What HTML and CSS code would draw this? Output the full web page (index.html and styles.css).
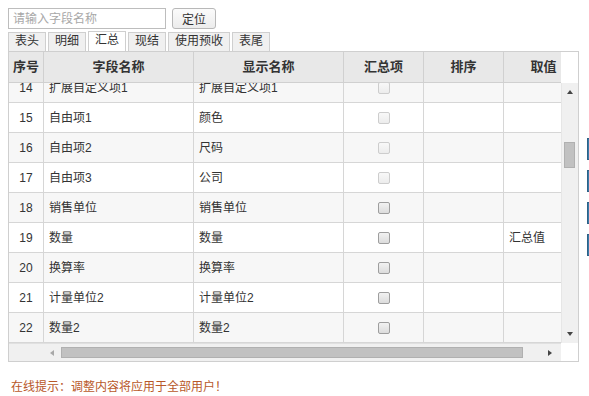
FILE: index.html
```html
<!DOCTYPE html>
<html lang="zh">
<head>
<meta charset="utf-8">
<title>字段设置</title>
<link rel="stylesheet" href="styles.css">
</head>
<body>
<div class="page">
  <div class="main">
    <div class="left">
      <div class="toolbar">
        <input class="search" type="text" placeholder="请输入字段名称">
        <button class="locate" type="button">定位</button>
      </div>
      <div class="tabs">
        <span class="tab">表头</span>
        <span class="tab">明细</span>
        <span class="tab active">汇总</span>
        <span class="tab">现结</span>
        <span class="tab">使用预收</span>
        <span class="tab">表尾</span>
      </div>
      <div class="grid">
        <div class="head">
          <div class="row hrow">
            <div class="c">序号</div>
            <div class="c">字段名称</div>
            <div class="c">显示名称</div>
            <div class="c">汇总项</div>
            <div class="c">排序</div>
            <div class="c">取值</div>
          </div>
        </div>
        <div class="head-corner"></div>
        <div class="body">
          <div class="rows">
            <div class="row alt"><div class="c num">14</div><div class="c">扩展自定义项1</div><div class="c">扩展自定义项1</div><div class="c ck"><span class="box dis"></span></div><div class="c"></div><div class="c"></div></div>
            <div class="row"><div class="c num">15</div><div class="c">自由项1</div><div class="c">颜色</div><div class="c ck"><span class="box dis"></span></div><div class="c"></div><div class="c"></div></div>
            <div class="row alt"><div class="c num">16</div><div class="c">自由项2</div><div class="c">尺码</div><div class="c ck"><span class="box dis"></span></div><div class="c"></div><div class="c"></div></div>
            <div class="row"><div class="c num">17</div><div class="c">自由项3</div><div class="c">公司</div><div class="c ck"><span class="box dis"></span></div><div class="c"></div><div class="c"></div></div>
            <div class="row alt"><div class="c num">18</div><div class="c">销售单位</div><div class="c">销售单位</div><div class="c ck"><span class="box"></span></div><div class="c"></div><div class="c"></div></div>
            <div class="row"><div class="c num">19</div><div class="c">数量</div><div class="c">数量</div><div class="c ck"><span class="box"></span></div><div class="c"></div><div class="c">汇总值</div></div>
            <div class="row alt"><div class="c num">20</div><div class="c">换算率</div><div class="c">换算率</div><div class="c ck"><span class="box"></span></div><div class="c"></div><div class="c"></div></div>
            <div class="row"><div class="c num">21</div><div class="c">计量单位2</div><div class="c">计量单位2</div><div class="c ck"><span class="box"></span></div><div class="c"></div><div class="c"></div></div>
            <div class="row alt"><div class="c num">22</div><div class="c">数量2</div><div class="c">数量2</div><div class="c ck"><span class="box"></span></div><div class="c"></div><div class="c"></div></div>
          </div>
        </div>
        <div class="vscroll">
          <span class="arrow up"></span>
          <span class="vthumb"></span>
          <span class="arrow down"></span>
        </div>
        <div class="hscroll">
          <span class="harrow left"></span>
          <span class="hthumb"></span>
          <span class="harrow right"></span>
        </div>
        <div class="corner"></div>
      </div>
      <p class="tip">在线提示：调整内容将应用于全部用户！</p>
    </div>
    <div class="side">
      <span class="sbtn"></span>
      <span class="sbtn"></span>
      <span class="sbtn"></span>
      <span class="sbtn"></span>
    </div>
  </div>
</div>
</body>
</html>
```

FILE: styles.css
```css
html, body {
  margin: 0;
  padding: 0;
  background: #fff;
  overflow: hidden;
}
body {
  font-family: "Liberation Sans", "Noto Sans CJK SC", sans-serif;
  font-size: 12px;
  color: #333;
}
.page {
  padding: 8px 0 0 8px;
}
.main {
  display: flex;
  align-items: flex-start;
}
.left {
  width: 571px;
  flex: none;
}
.toolbar {
  display: flex;
  gap: 6px;
  height: 21px;
}
.search {
  box-sizing: border-box;
  width: 158px;
  height: 21px;
  margin: 0;
  padding: 0 4px;
  border: 1px solid #bdbdbd;
  font-family: inherit;
  font-size: 12px;
  color: #333;
  outline: none;
}
.search::placeholder {
  color: #a8a8a8;
}
.locate {
  box-sizing: border-box;
  width: 44px;
  height: 21px;
  margin: 0;
  padding: 0;
  border: 1px solid #b8b8b8;
  border-radius: 3px;
  background: linear-gradient(#fbfbfb, #ececec);
  font-family: inherit;
  font-size: 12px;
  color: #333;
}
.tabs {
  display: flex;
  gap: 2px;
  margin-top: 2px;
  height: 20px;
  align-items: flex-end;
}
.tab {
  box-sizing: border-box;
  height: 19px;
  line-height: 17px;
  padding: 0 6px;
  border: 1px solid #cfcfcf;
  border-bottom: none;
  background: #f0f0f0;
  color: #333;
}
.tab.active {
  height: 20px;
  background: #fff;
}
.grid {
  display: grid;
  grid-template-columns: 552px 17px;
  grid-template-rows: 31px 260px 18px;
  border: 1px solid #cfcfcf;
  width: 569px;
  background: #fff;
}
.head, .body, .hscroll {
  overflow: hidden;
}
.row {
  display: grid;
  grid-template-columns: 35px 150px 150px 80px 80px 80px 80px;
  width: 655px;
  height: 30px;
  box-sizing: border-box;
  border-bottom: 1px solid #d6d6d6;
  background: #fff;
}
.row.alt {
  background: #f7f7f7;
}
.hrow {
  height: 31px;
  background: #e8e8e8;
  border-bottom: 1px solid #d0d0d0;
}
.c {
  box-sizing: border-box;
  border-right: 1px solid #d6d6d6;
  padding: 0 5px;
  line-height: 30px;
  white-space: nowrap;
  overflow: hidden;
}
.hrow .c {
  text-align: center;
  font-weight: bold;
  font-size: 13px;
  line-height: 30px;
  border-right-color: #d0d0d0;
  padding: 0;
}
.c.num {
  text-align: center;
  padding: 0;
}
.c.ck {
  display: flex;
  align-items: center;
  justify-content: center;
  padding-right: 4px;
}
.rows {
  margin-top: -10px;
}
.box {
  box-sizing: border-box;
  width: 12px;
  height: 12px;
  border: 1px solid #9e9e9e;
  border-radius: 2px;
  background: linear-gradient(#f2f2f2, #dcdcdc);
}
.box.dis {
  border-color: #cdcdcd;
  background: linear-gradient(#f8f8f8, #ececec);
}
.head-corner {
  background: #fff;
}
.vscroll {
  position: relative;
  background: #f0f0f0;
  border-left: 1px solid #e6e6e6;
}
.arrow {
  position: absolute;
  left: 5px;
  width: 0;
  height: 0;
  border-left: 3px solid transparent;
  border-right: 3px solid transparent;
}
.arrow.up {
  top: 7px;
  border-bottom: 4px solid #444;
}
.arrow.down {
  bottom: 7px;
  border-top: 4px solid #444;
}
.vthumb {
  position: absolute;
  left: 2px;
  top: 59px;
  width: 11px;
  height: 26px;
  box-sizing: border-box;
  background: #c1c1c1;
  border: 1px solid #b0b0b0;
}
.hscroll {
  position: relative;
  background: #f0f0f0;
  border-top: 1px solid #e0e0e0;
}
.harrow {
  position: absolute;
  top: 6px;
  width: 0;
  height: 0;
  border-top: 3px solid transparent;
  border-bottom: 3px solid transparent;
}
.harrow.left {
  left: 41px;
  border-right: 4px solid #a8a8a8;
}
.harrow.right {
  left: 539px;
  border-left: 4px solid #444;
}
.hthumb {
  position: absolute;
  left: 52px;
  top: 3px;
  width: 462px;
  height: 11px;
  box-sizing: border-box;
  background: #c1c1c1;
  border: 1px solid #b0b0b0;
}
.corner {
  background: #fff;
}
.tip {
  margin: 17px 0 0 3px;
  color: #b8582a;
  font-size: 12px;
  line-height: 16px;
}
.side {
  display: flex;
  flex-direction: column;
  gap: 10px;
  margin-left: 8px;
  padding-top: 130px;
  flex: none;
}
.sbtn {
  display: block;
  width: 60px;
  height: 22px;
  box-sizing: border-box;
  border: 1px solid #2c6186;
  background: #3a7aa8;
}
```
